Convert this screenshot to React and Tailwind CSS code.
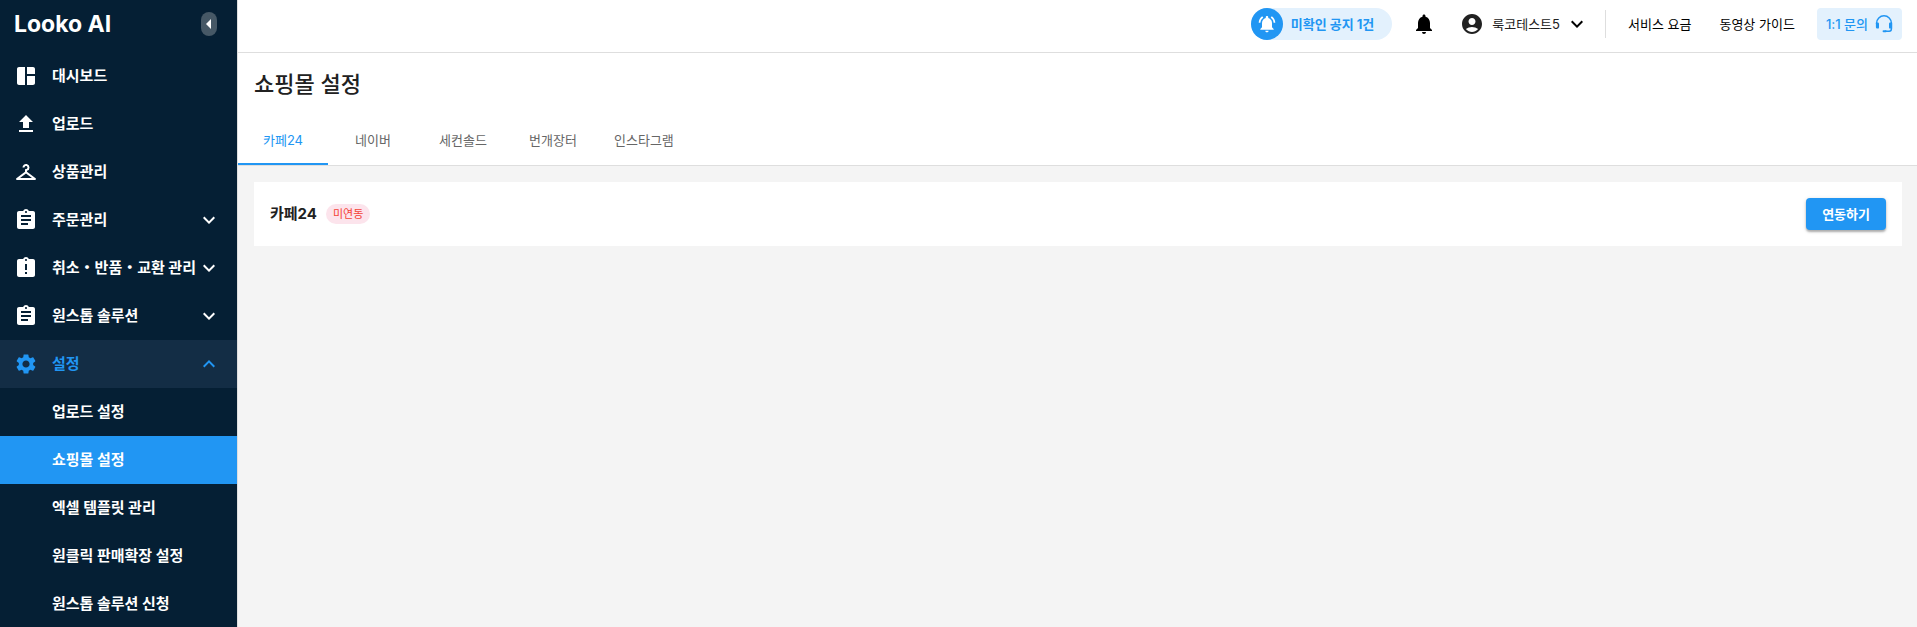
import {
  MdSpaceDashboard,
  MdUpload,
  MdCheckroom,
  MdAssignment,
  MdAssignmentLate,
  MdSettings,
  MdExpandMore,
  MdExpandLess,
  MdArrowLeft,
  MdNotifications,
  MdNotificationsActive,
  MdAccountCircle,
} from "react-icons/md";

const menu = [
  { label: "대시보드", icon: MdSpaceDashboard },
  { label: "업로드", icon: MdUpload },
  { label: "상품관리", icon: MdCheckroom },
  { label: "주문관리", icon: MdAssignment, expandable: true },
  { label: "취소・반품・교환 관리", icon: MdAssignmentLate, expandable: true },
  { label: "원스톱 솔루션", icon: MdAssignment, expandable: true },
  { label: "설정", icon: MdSettings, expandable: true, open: true },
];

const settings = ["업로드 설정", "쇼핑몰 설정", "엑셀 템플릿 관리", "원클릭 판매확장 설정", "원스톱 솔루션 신청"];
const currentSetting = "쇼핑몰 설정";

const tabs = ["카페24", "네이버", "세컨솔드", "번개장터", "인스타그램"];
const currentTab = "카페24";

function HeadsetIcon() {
  return (
    <svg viewBox="0 0 18 18" className="size-[18px]" fill="none" aria-hidden="true">
      <path d="M1.6 9V8.2a7.4 7.4 0 0 1 14.8 0V14a2.2 2.2 0 0 1-2.2 2.2H10" stroke="currentColor" strokeWidth="1.5" />
      <path d="M0.9 7.6H2.8A1.2 1.2 0 0 1 4 8.8V12.4A1.2 1.2 0 0 1 2.8 13.6H2.2A1.3 1.3 0 0 1 0.9 12.3Z" fill="currentColor" />
      <path d="M17.1 7.6H15.2A1.2 1.2 0 0 0 14 8.8V12.4A1.2 1.2 0 0 0 15.2 13.6H17.1Z" fill="currentColor" />
      <rect x="7.6" y="15.2" width="4" height="2" rx="0.9" fill="currentColor" />
    </svg>
  );
}

function Sidebar() {
  return (
    <aside className="w-[238px] shrink-0 border-r border-[#dedede] bg-[#051f34] text-white">
      <div className="flex h-[52px] items-center justify-between pr-5 pb-1 pl-[14px]">
        <a href="#" className="text-[23px] leading-7 font-bold">Looko AI</a>
        <button
          type="button"
          aria-label="메뉴 접기"
          className="flex h-6 w-4 items-center justify-center rounded-full bg-[#465866]"
        >
          <MdArrowLeft className="size-6 shrink-0" />
        </button>
      </div>
      <nav>
        <ul>
          {menu.map(({ label, icon: Icon, expandable, open }) => (
            <li key={label}>
              <button
                type="button"
                aria-expanded={expandable ? Boolean(open) : undefined}
                className={`flex h-12 w-full items-center pr-4 pl-[14px] text-left text-[15px] leading-5 font-bold whitespace-nowrap ${
                  open ? "bg-[#132d45] text-[#2196f3]" : ""
                }`}
              >
                <Icon className="size-6 shrink-0" />
                <span className="ml-[14px] min-w-0 flex-1">{label}</span>
                {expandable && (open ? <MdExpandLess className="size-6 shrink-0" /> : <MdExpandMore className="size-6 shrink-0" />)}
              </button>
            </li>
          ))}
        </ul>
        <ul>
          {settings.map((label) => (
            <li key={label}>
              <a
                href="#"
                className={`flex h-12 items-center pl-[52px] text-[15px] leading-5 font-bold ${
                  label === currentSetting ? "bg-[#2196f3]" : ""
                }`}
              >
                {label}
              </a>
            </li>
          ))}
        </ul>
      </nav>
    </aside>
  );
}

function Header() {
  return (
    <header className="flex h-[53px] items-center justify-end border-b border-[#dedede] bg-white pr-[15px] pb-1 text-[13px] leading-5 text-black">
      <button type="button" className="flex h-8 items-center rounded-full bg-[#e3f1fd] pr-4 font-bold text-[#2196f3]">
        <span className="mr-2 flex size-8 items-center justify-center rounded-full bg-[#2196f3] text-white">
          <MdNotificationsActive className="size-5" />
        </span>
        <span className="pr-[2px]">미확인 공지 1건</span>
      </button>
      <button type="button" aria-label="알림" className="ml-5">
        <MdNotifications className="size-6" />
      </button>
      <button type="button" className="ml-6 flex items-center text-[#212121]">
        <MdAccountCircle className="size-6" />
        <span className="ml-2">룩코테스트5</span>
        <MdExpandMore className="ml-[5px] size-6 text-black" />
      </button>
      <span className="ml-4 h-7 w-px bg-[#dedede]" />
      <a href="#" className="ml-[22px]">서비스 요금</a>
      <a href="#" className="ml-7">동영상 가이드</a>
      <button type="button" className="ml-[22px] flex h-8 items-center gap-[7px] rounded bg-[#e3f1fd] px-[9px] font-medium text-[#2196f3]">
        1:1 문의
        <HeadsetIcon />
      </button>
    </header>
  );
}

export default function App() {
  return (
    <div className="flex min-h-screen bg-[#f4f4f4] font-['Inter','Noto_Sans_CJK_KR',sans-serif] text-[#212121]">
      <Sidebar />
      <div className="min-w-0 flex-1">
        <Header />
        <main>
          <div className="border-b border-[#dedede] bg-white">
            <h1 className="px-4 pt-[15px] pb-[17px] text-[22px] leading-8 font-medium">쇼핑몰 설정</h1>
            <div role="tablist" className="flex">
              {tabs.map((tab) => (
                <button
                  key={tab}
                  type="button"
                  role="tab"
                  aria-selected={tab === currentTab}
                  className={`h-12 min-w-[90px] border-b-2 px-4 text-[13px] leading-5 ${
                    tab === currentTab ? "border-[#2196f3] text-[#2196f3]" : "border-transparent text-[#666666]"
                  }`}
                >
                  {tab}
                </button>
              ))}
            </div>
          </div>
          <section className="mt-4 mr-[15px] ml-4 flex h-16 items-center bg-white px-4">
            <h2 className="text-[15px] leading-5 font-bold">카페24</h2>
            <span className="ml-[9px] rounded-full bg-[#fce4ec] px-[7px] text-[11px] leading-5 text-[#f44336]">미연동</span>
            <button
              type="button"
              className="ml-auto h-8 rounded bg-[#2196f3] px-4 text-[13px] leading-5 font-bold text-white shadow-[0_2px_2px_rgba(0,0,0,0.25),0_1px_4px_rgba(0,0,0,0.15)]"
            >
              연동하기
            </button>
          </section>
        </main>
      </div>
    </div>
  );
}
